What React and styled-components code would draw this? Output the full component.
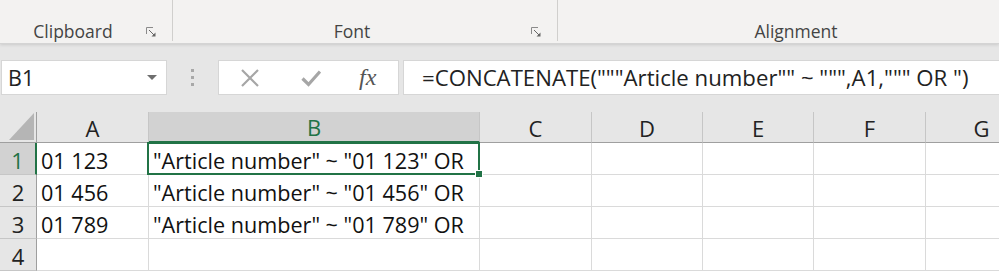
import React from 'react'
import styled, { createGlobalStyle } from 'styled-components'

const GlobalStyle = createGlobalStyle`
  html, body {
    margin: 0;
    padding: 0;
    background: #e6e6e6;
    overflow: hidden;
  }
  * { box-sizing: border-box; }
`

const Page = styled.div`
  width: 999px;
  height: 271px;
  overflow: hidden;
  font-family: "Open Sans", "Noto Sans", sans-serif;
`

// ribbon -------------------------------------------------------------

const Ribbon = styled.div`
  height: 44px;
  background: #f3f2f1;
  border-bottom: 1px solid #d4d4d4;
  box-shadow: 0 1px 3px rgba(0, 0, 0, 0.12);
  display: flex;
`

const Group = styled.div`
  width: ${p => p.width}px;
  flex-shrink: 0;
  display: flex;
  align-items: flex-end;
  padding-bottom: 1px;
  margin-bottom: 2px;
  border-right: ${p => (p.last ? 'none' : '1px solid #d0cfcd')};
`

const GroupLabel = styled.div`
  flex: 1;
  text-align: center;
  font-size: 17.5px;
  color: #444;
  line-height: 18px;
  padding-left: ${p => p.shift || 0}px;
`

const Launcher = styled.div`
  width: 26px;
  height: 18px;
  display: flex;
  align-items: center;
  padding-top: 1px;
`

const LauncherIcon = () => (
  <svg width="10" height="10" viewBox="0 0 10 10">
    <path d="M0.5 7 V0.5 H7" fill="none" stroke="#8a8a8a" strokeWidth="1" />
    <path d="M3 3 L8 8" stroke="#666" strokeWidth="1" />
    <path d="M9.5 5.5 V9.5 H5.5 Z" fill="#666" />
  </svg>
)

// formula bar --------------------------------------------------------

const FormulaRow = styled.div`
  display: flex;
  align-items: center;
  height: 35px;
  margin-top: 16px;
  padding-left: 1px;
`

const NameBox = styled.div`
  width: 166px;
  height: 35px;
  background: #fff;
  border: 1px solid #d6d6d6;
  display: flex;
  align-items: center;
  justify-content: space-between;
  padding: 0 9px 0 6px;
  font-size: 21.5px;
  color: #222;
`

const Caret = styled.div`
  width: 0;
  height: 0;
  border-left: 5px solid transparent;
  border-right: 5px solid transparent;
  border-top: 5px solid #6e6e6e;
`

const Grip = styled.div`
  width: 51px;
  display: flex;
  flex-direction: column;
  align-items: center;
  gap: 4px;
  span {
    width: 3px;
    height: 3px;
    background: #a8a8a8;
  }
`

const FxBox = styled.div`
  width: 181px;
  height: 35px;
  background: #fff;
  border: 1px solid #d6d6d6;
  display: flex;
  align-items: center;
  padding-left: 21px;
  gap: 41px;
`

const Fx = styled.span`
  font-family: "Liberation Serif", serif;
  font-style: italic;
  font-size: 24px;
  color: #555;
  margin-left: -3px;
`

const FormulaBox = styled.div`
  flex: 1;
  height: 35px;
  margin-left: 4px;
  background: #fff;
  border: 1px solid #d6d6d6;
  border-right: none;
  display: flex;
  align-items: center;
  padding-left: 18px;
  font-size: 22.2px;
  color: #222;
  white-space: pre;
`

const CancelIcon = () => (
  <svg width="20" height="18" viewBox="0 0 20 18">
    <path d="M2 1 L18 17 M18 1 L2 17" stroke="#a6a6a6" strokeWidth="2.2" />
  </svg>
)

const CheckIcon = () => (
  <svg width="20" height="18" viewBox="0 0 20 18">
    <path d="M1.5 9.5 L7.5 15.5 L19 2.5" fill="none" stroke="#a6a6a6" strokeWidth="3.2" />
  </svg>
)

// grid ---------------------------------------------------------------

const Grid = styled.div`
  margin-top: 17px;
  display: grid;
  grid-template-columns: 37px 112px 331px 112px 111px 111px 112px 112px;
  grid-auto-rows: 32px;
  grid-template-rows: 31px;
`

const Corner = styled.div`
  background: #e6e6e6;
  border-right: 1px solid #9f9f9f;
  border-bottom: 1px solid #9f9f9f;
  display: flex;
  align-items: flex-end;
  justify-content: flex-end;
  padding: 0 2px 2px 0;
`

const ColHead = styled.div`
  background: ${p => (p.active ? '#d2d2d2' : '#e6e6e6')};
  color: ${p => (p.active ? '#217346' : '#222')};
  border-right: 1px solid #c6c6c6;
  border-bottom: ${p => (p.active ? '2px solid #217346' : '1px solid #9f9f9f')};
  display: flex;
  align-items: center;
  justify-content: center;
  font-size: 22px;
  padding-top: 1px;
`

const RowHead = styled.div`
  background: ${p => (p.active ? '#d2d2d2' : '#e6e6e6')};
  color: ${p => (p.active ? '#217346' : '#222')};
  border-right: ${p => (p.active ? '2px solid #217346' : '1px solid #9f9f9f')};
  border-bottom: 1px solid #c6c6c6;
  display: flex;
  align-items: center;
  justify-content: center;
  font-size: 22px;
  padding-top: 3px;
`

const Cell = styled.div`
  background: #fff;
  border-right: 1px solid #dadada;
  border-bottom: 1px solid #dadada;
  display: flex;
  align-items: center;
  padding: 3px 0 0 4px;
  font-size: 21.6px;
  color: #111;
  white-space: nowrap;
  position: relative;
  z-index: ${p => (p.selected ? 2 : 1)};
`

const Selection = styled.div`
  position: absolute;
  left: -2px;
  top: -1px;
  right: -1px;
  bottom: -1px;
  border: 2px solid #217346;
  pointer-events: none;
`

const Handle = styled.div`
  position: absolute;
  right: -5px;
  bottom: -5px;
  width: 8px;
  height: 8px;
  background: #217346;
  border: 1px solid #fff;
`

const columns = ['A', 'B', 'C', 'D', 'E', 'F', 'G']

const data = [
  ['01 123', '"Article number" ~ "01 123" OR'],
  ['01 456', '"Article number" ~ "01 456" OR'],
  ['01 789', '"Article number" ~ "01 789" OR'],
  ['', ''],
]

export default function App() {
  return (
    <Page>
      <GlobalStyle />
      <Ribbon>
        <Group width={173}>
          <GroupLabel shift={0}>Clipboard</GroupLabel>
          <Launcher><LauncherIcon /></Launcher>
        </Group>
        <Group width={385}>
          <GroupLabel>Font</GroupLabel>
          <Launcher><LauncherIcon /></Launcher>
        </Group>
        <Group width={476} last>
          <GroupLabel>Alignment</GroupLabel>
        </Group>
      </Ribbon>

      <FormulaRow>
        <NameBox>
          B1
          <Caret />
        </NameBox>
        <Grip><span /><span /><span /></Grip>
        <FxBox>
          <CancelIcon />
          <CheckIcon />
          <Fx>fx</Fx>
        </FxBox>
        <FormulaBox>=CONCATENATE("""Article number"" ~ """,A1,""" OR ")</FormulaBox>
      </FormulaRow>

      <Grid>
        <Corner>
          <svg width="25" height="27" viewBox="0 0 25 27">
            <path d="M25 0 V27 H0 Z" fill="#b5b5b5" />
          </svg>
        </Corner>
        {columns.map(c => (
          <ColHead key={c} active={c === 'B'}>{c}</ColHead>
        ))}
        {data.map((row, i) => {
          const sel = i === 0
          return (
            <React.Fragment key={i}>
              <RowHead active={sel}>{i + 1}</RowHead>
              {columns.map((c, j) => (
                <Cell key={c} selected={sel && c === 'B'}>
                  {row[j] || ''}
                  {sel && c === 'B' && (
                    <Selection>
                      <Handle />
                    </Selection>
                  )}
                </Cell>
              ))}
            </React.Fragment>
          )
        })}
      </Grid>
    </Page>
  )
}
